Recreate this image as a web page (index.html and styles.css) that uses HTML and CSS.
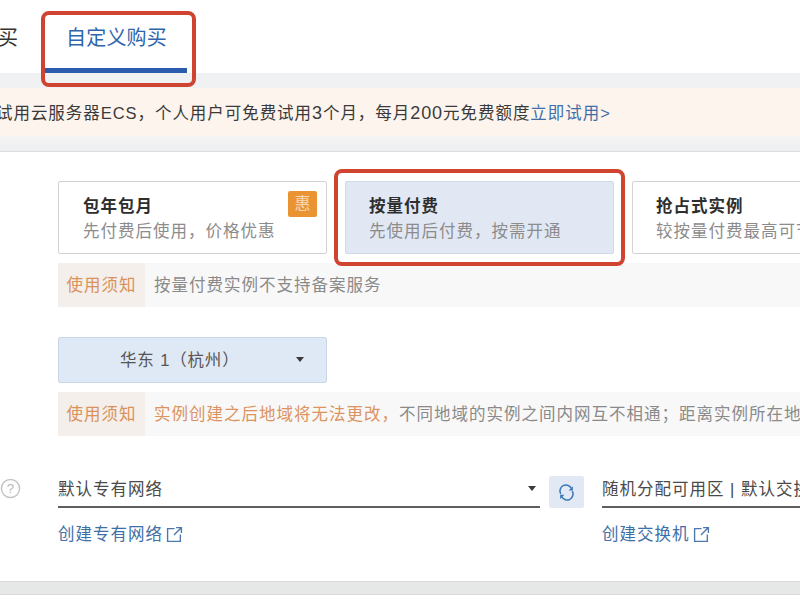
FILE: index.html
```html
<!DOCTYPE html>
<html lang="zh-CN">
<head>
<meta charset="utf-8">
<title>自定义购买</title>
<link rel="stylesheet" href="styles.css">
</head>
<body>
<div class="page">
  <header class="tabs">
    <span class="tab-prev">买</span>
    <span class="tab-active">自定义购买</span>
  </header>
  <div class="gap-top"></div>
  <div class="banner"><span class="banner-text">试用云服务器ECS，个人用户可免费试用<span class="num">3</span>个月，每月<span class="num">200</span>元免费额度<a class="link">立即试用&gt;</a></span></div>
  <div class="gap-mid"></div>
  <main class="card">
    <div class="plans">
      <div class="plan">
        <div class="plan-title">包年包月</div>
        <div class="plan-sub">先付费后使用，价格优惠</div>
        <span class="badge">惠</span>
      </div>
      <div class="plan plan-on">
        <div class="plan-title">按量付费</div>
        <div class="plan-sub">先使用后付费，按需开通</div>
      </div>
      <div class="plan plan-last">
        <div class="plan-title">抢占式实例</div>
        <div class="plan-sub">较按量付费最高可节省90%</div>
      </div>
    </div>
    <div class="notice">
      <span class="notice-label">使用须知</span>
      <span class="notice-text">按量付费实例不支持备案服务</span>
    </div>
    <div class="region">
      <span>华东 1（杭州）</span>
      <i class="caret region-caret"></i>
    </div>
    <div class="notice">
      <span class="notice-label">使用须知</span>
      <span class="notice-text"><em class="warn">实例创建之后地域将无法更改，</em>不同地域的实例之间内网互不相通；距离实例所在地域较近的客户可降低访问延时</span>
    </div>
    <div class="net">
      <svg class="help" viewBox="0 0 22 22"><circle cx="11" cy="11" r="9.5"/><text x="11" y="15.5" text-anchor="middle">?</text></svg>
      <div class="net-col net-col-a">
        <div class="select"><span>默认专有网络</span><i class="caret"></i></div>
        <a class="link create">创建专有网络<svg class="ext" viewBox="0 0 16 16"><path d="M8 2.5H1.5v12h12V8M9.5 1.5h5v5M14.5 1.5L7.5 8.5"/></svg></a>
      </div>
      <button class="refresh" type="button"><svg viewBox="0 0 20 20"><path d="M3.2 11.5A7 7 0 0 1 15.5 4.8M16.8 8.5A7 7 0 0 1 4.5 15.2"/><path class="fill" d="M17.5 2.5v5h-5zM2.5 17.5v-5h5z"/></svg></button>
      <div class="net-col net-col-b">
        <div class="select"><span>随机分配可用区 | 默认交换机</span></div>
        <a class="link create">创建交换机<svg class="ext" viewBox="0 0 16 16"><path d="M8 2.5H1.5v12h12V8M9.5 1.5h5v5M14.5 1.5L7.5 8.5"/></svg></a>
      </div>
    </div>
  </main>
  <div class="gap-bottom"></div>
  <div class="mark mark-tab"></div>
  <div class="mark mark-plan"></div>
</div>
</body>
</html>
```
FILE: styles.css
```css
* { box-sizing: border-box; }
html, body { margin: 0; padding: 0; background: #fff; }
.page {
  position: relative;
  width: 800px;
  height: 600px;
  overflow: hidden;
  font-family: "Liberation Sans", "Noto Sans CJK SC", sans-serif;
  color: #333;
  background: #fff;
}
.tabs {
  height: 73px;
  display: flex;
  margin-left: -2px;
  background: #fff;
}
.tab-prev { font-size: 20px; line-height: 20px; padding-top: 28px; color: #333; }
.tab-active {
  margin-left: 26px;
  width: 143px;
  height: 73px;
  padding: 28px 0 0 22px;
  font-size: 20px;
  letter-spacing: 0.2px;
  line-height: 20px;
  color: #2f65ad;
  border-bottom: 5px solid #2a5bad;
}
.gap-top { height: 15px; background: #f0f1f3; }
.gap-mid { height: 16px; background: linear-gradient(#f4f4f5, #eeeff0); border-bottom: 1px solid #dcdcdc; }
.gap-bottom { height: 14px; background: #e6e7e7; border-top: 1px solid #d8d8d8; border-bottom: 1px solid #d8d8d8; }
.banner {
  height: 48px;
  display: flex;
  align-items: center;
  background: #fdf4ee;
  overflow: hidden;
  font-size: 16.5px;
  letter-spacing: 0.95px;
  color: #3a3a3a;
  white-space: nowrap;
}
.banner-text { margin-left: -4px; }
.num { font-size: 18px; }
.link { color: #3f6fa8; text-decoration: none; }
.card {
  height: 429px;
  padding: 29px 0 0 58px;
  background: #fff;
  overflow: hidden;
}
.plans { display: flex; gap: 18px; width: 900px; }
.plan {
  position: relative;
  flex: none;
  width: 269px;
  height: 73px;
  padding: 13px 0 0 24px;
  background: #fff;
  border: 1px solid #d3d3d3;
  border-radius: 2px;
}
.plan-on { padding-left: 23px; background: #e1e8f4; border-color: #cfdaeb; }
.plan-last { padding-left: 23px; }
.plan-title { font-size: 16.5px; letter-spacing: 1px; line-height: 22px; font-weight: 700; color: #2e2e2e; }
.plan-sub { margin-top: 3px; font-size: 16.5px; letter-spacing: 1px; line-height: 22px; color: #8c8c8c; white-space: nowrap; }
.badge {
  position: absolute;
  top: 9px;
  right: 9px;
  width: 29px;
  height: 26px;
  border-radius: 2px;
  background: #ea9333;
  color: #f6d9b5;
  font-size: 16px;
  line-height: 26px;
  text-align: center;
}
.notice {
  display: flex;
  width: 800px;
  height: 44px;
  margin-top: 9px;
  background: #f8f8f8;
  font-size: 16.5px;
  letter-spacing: 1px;
  line-height: 45px;
  white-space: nowrap;
}
.notice-label { flex: none; width: 87px; text-align: center; background: #f4efea; color: #d9925c; }
.notice-text { margin-left: 9px; color: #8a8a8a; }
.warn { font-style: normal; color: #dc9360; }
.region {
  position: relative;
  width: 269px;
  height: 46px;
  margin-top: 30px;
  padding-left: 61px;
  background: #dfe8f5;
  border: 1px solid #c9d7ea;
  border-radius: 2px;
  font-size: 16.5px;
  letter-spacing: 0.85px;
  line-height: 45px;
  color: #555;
}
.caret {
  display: block;
  width: 0;
  height: 0;
  border-left: 4px solid transparent;
  border-right: 4px solid transparent;
  border-top: 5px solid #3a3a3a;
}
.region-caret { position: absolute; top: 19px; left: 237px; }
.net { position: relative; display: flex; margin-top: 34px; margin-left: -58px; padding-left: 58px; align-items: flex-start; }
.help {
  position: absolute;
  left: 0;
  top: 8px;
  width: 21px;
  height: 21px;
  fill: none;
  stroke: #c4c4c4;
  stroke-width: 1.5;
}
.help text { fill: #b5b5b5; stroke: none; font-size: 14px; font-family: "Liberation Sans", sans-serif; }
.net-col { flex: none; }
.net-col-a { width: 482px; }
.net-col-b { width: 300px; margin-left: 18px; }
.select {
  position: relative;
  display: flex;
  align-items: center;
  justify-content: space-between;
  height: 38px;
  padding-right: 4px;
  border-bottom: 2px solid #5e5e5e;
  font-size: 16.5px;
  letter-spacing: 1px;
  color: #4a4a4a;
  white-space: nowrap;
}
.create { display: flex; align-items: center; margin-top: 15px; font-size: 16.5px; letter-spacing: 1px; line-height: 22px; }
.ext { width: 17px; height: 17px; margin-left: 3px; fill: none; stroke: #4d78ae; stroke-width: 1.3; }
.refresh {
  flex: none;
  width: 35px;
  height: 32px;
  margin: 6px 0 0 9px;
  padding: 7px 9px;
  border: 0;
  border-radius: 2px;
  background: #e2e9f5;
}
.refresh svg { display: block; width: 17px; height: 17px; fill: none; stroke: #3d78b5; stroke-width: 1.8; }
.refresh .fill { fill: #3d78b5; stroke: none; }
.mark {
  position: absolute;
  border: 4px solid #cf4431;
  border-radius: 8px;
}
.mark-tab { left: 41px; top: 11px; width: 155px; height: 76px; }
.mark-plan { left: 334px; top: 169px; width: 291px; height: 97px; }
```
